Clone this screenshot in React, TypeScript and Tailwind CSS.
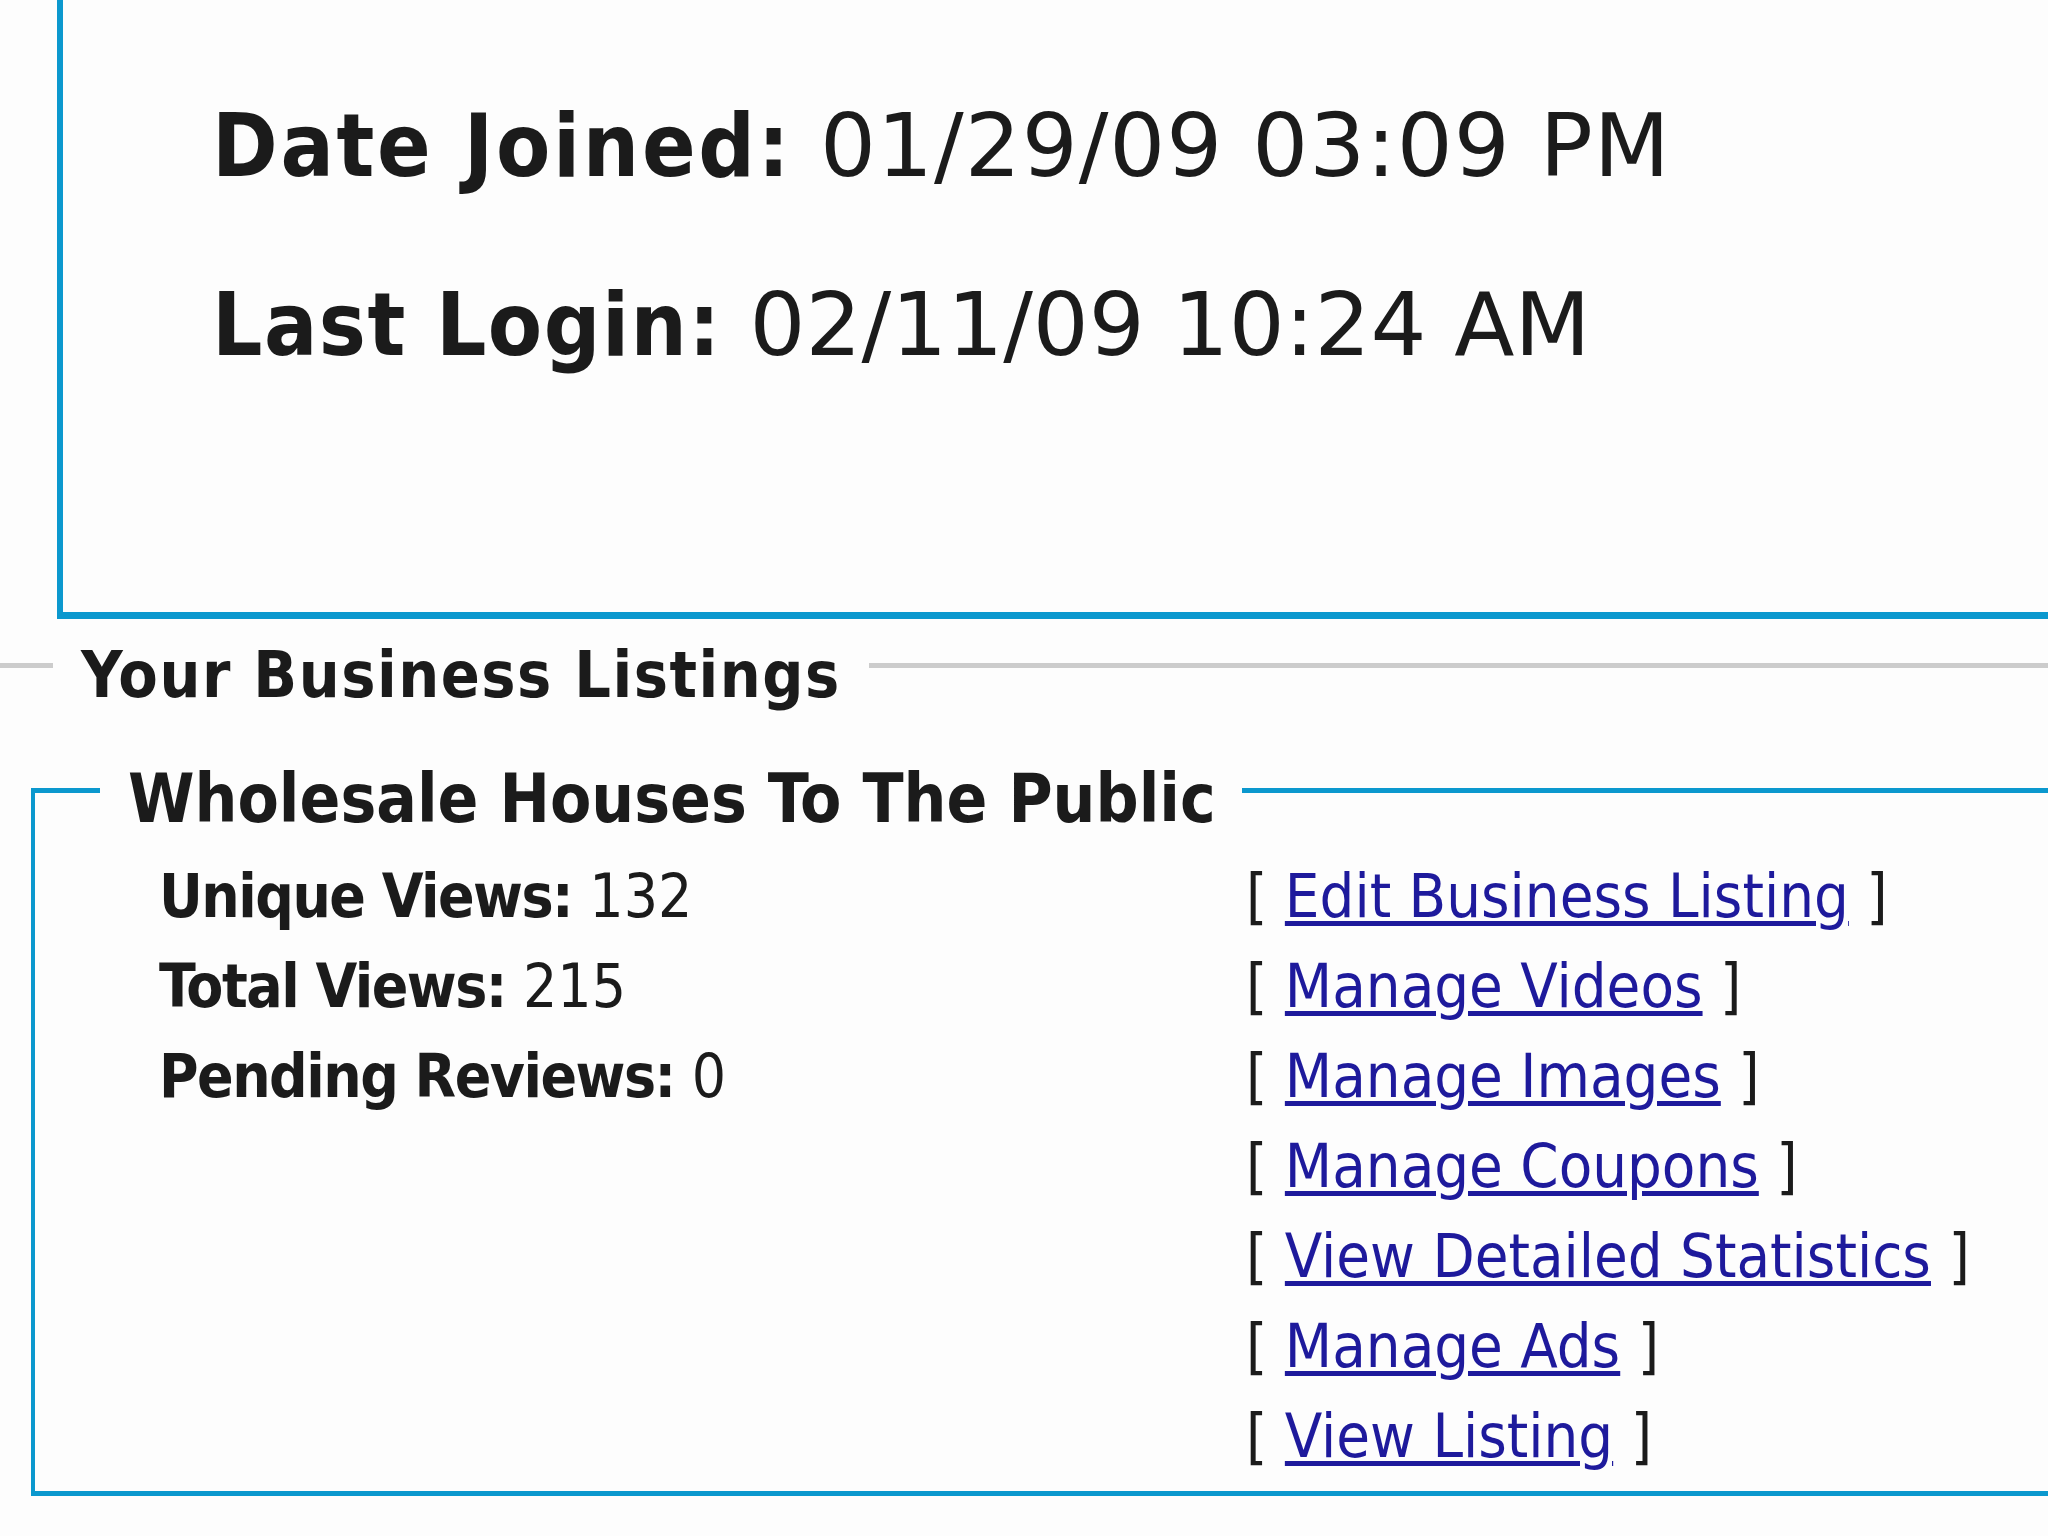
import React from "react";

const font = "font-['DejaVu_Sans',Verdana,sans-serif]";
const cond = "[font-stretch:condensed]";

const links = [
  "Edit Business Listing",
  "Manage Videos",
  "Manage Images",
  "Manage Coupons",
  "View Detailed Statistics",
  "Manage Ads",
  "View Listing",
];

const stats: [string, string][] = [
  ["Unique Views:", "132"],
  ["Total Views:", "215"],
  ["Pending Reviews:", "0"],
];

export default function App() {
  return (
    <div className={`w-[2048px] h-[1536px] overflow-hidden bg-[#fdfdfd] text-[#1b1b1b] ${font}`}>
      {/* Member info box */}
      <div className="ml-[57px] w-[2100px] border-l-[6px] border-b-[7px] border-[#0b98ce] pl-[149px] pt-[96px] pb-[237px]">
        <div className="text-[88px] leading-[100px] whitespace-nowrap">
          <span className={`font-bold tracking-[2.7px] ${cond}`}>Date Joined:</span>{" "}
          <span className="tracking-[1px]">01/29/09 03:09 PM</span>
        </div>
        <div className="mt-[79px] text-[88px] leading-[100px] whitespace-nowrap">
          <span className={`font-bold tracking-[1.5px] ${cond}`}>Last Login:</span>{" "}
          <span className="tracking-[0px]">02/11/09 10:24 AM</span>
        </div>
      </div>

      {/* Your Business Listings header */}
      <div className="mt-[19px] flex items-start">
        <div className="mt-[25px] h-[5px] w-[53px] bg-[#cccccc]" />
        <div className={`px-[28px] text-[64px] leading-[74px] font-bold tracking-[1.5px] whitespace-nowrap ${cond}`}>
          Your Business Listings
        </div>
        <div className="mt-[25px] h-[5px] flex-1 bg-[#cccccc]" />
      </div>

      {/* Listing fieldset */}
      <div className="mt-[76px] ml-[31px] w-[2100px] flex flex-col border-l-[4px] border-b-[5px] border-[#0b98ce] pb-[10px]">
        <div className="-mt-[28px] flex items-start">
          <div className="mt-[28px] h-[5px] w-[65px] bg-[#0b98ce]" />
          <div className={`pl-[28px] pr-[26px] text-[67px] leading-[78px] font-bold whitespace-nowrap ${cond}`}>
            Wholesale Houses To The Public
          </div>
          <div className="mt-[28px] h-[5px] flex-1 bg-[#0b98ce]" />
        </div>

        <div className={`mt-[13px] flex ${cond}`}>
          <div className="w-[1211px] pl-[124px]">
            {stats.map(([label, value]) => (
              <div key={label} className="text-[60px] leading-[90px] whitespace-nowrap">
                <span className="font-bold tracking-[-1.5px]">{label}</span> {value}
              </div>
            ))}
          </div>
          <div>
            {links.map((l) => (
              <div key={l} className="text-[61px] leading-[90px] whitespace-nowrap">
                [{" "}
                <a
                  href="#"
                  className="text-[#1e1a9c] underline decoration-[length:5px] underline-offset-[4px]"
                >
                  {l}
                </a>{" "}
                ]
              </div>
            ))}
          </div>
        </div>
      </div>
    </div>
  );
}
